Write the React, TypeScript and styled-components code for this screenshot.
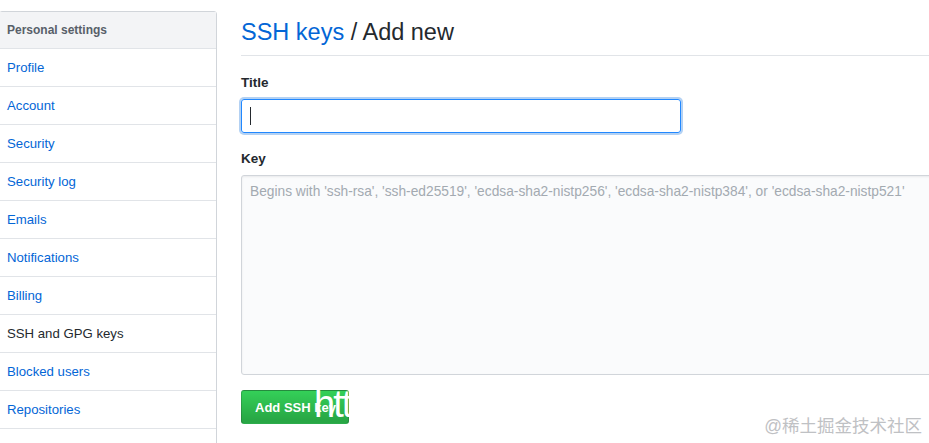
import { createGlobalStyle } from "styled-components";
import styled from "styled-components";

const GlobalStyle = createGlobalStyle`
    html, body {
        margin: 0;
        padding: 0;
        background: #fff;
        font-family: "Liberation Sans", Arial, sans-serif;
        color: #24292e;
        overflow: hidden;
    }
`;

const Page = styled.div`
    display: flex;
    align-items: flex-start;
    gap: 24px;
    width: 929px;
    height: 443px;
    padding-top: 11px;
    box-sizing: border-box;
    position: relative;
    overflow: hidden;
`;

const Menu = styled.nav`
    width: 218px;
    box-sizing: border-box;
    margin-left: -1px;
    flex-shrink: 0;
    border: 1px solid #d1d5da;
    border-radius: 3px;
    background: #fff;
`;

const MenuHeading = styled.div`
    height: 36px;
    display: flex;
    align-items: center;
    padding-left: 7px;
    background: #f3f4f6;
    border-bottom: 1px solid #e1e4e8;
    font-size: 12px;
    font-weight: 700;
    color: #586069;
`;

const MenuItem = styled.a<{ $selected?: boolean }>`
    display: flex;
    align-items: center;
    height: 37px;
    padding-left: 7px;
    border-bottom: 1px solid #e1e4e8;
    font-size: 13.2px;
    color: ${p => (p.$selected ? "#24292e" : "#0366d6")};
    text-decoration: none;
    cursor: pointer;
`;

const Main = styled.main`
    flex: 1;
    min-width: 0;
`;

const Subhead = styled.div`
    display: flex;
    align-items: center;
    height: 46px;
    border-bottom: 1px solid #e1e4e8;
    margin-top: -2px;
`;

const SubheadTitle = styled.h2`
    margin: 0;
    font-size: 23.5px;
    font-weight: 400;
    color: #24292e;

    a {
        color: #0366d6;
        text-decoration: none;
    }
`;

const Field = styled.div<{ $top: number }>`
    display: flex;
    flex-direction: column;
    gap: 8px;
    margin-top: ${p => p.$top}px;
`;

const Label = styled.label`
    font-size: 13.5px;
    font-weight: 700;
    color: #24292e;
    line-height: 16px;
`;

const TitleInput = styled.div`
    width: 440px;
    height: 34px;
    box-sizing: border-box;
    display: flex;
    align-items: center;
    border: 1px solid #2188ff;
    border-radius: 3px;
    box-shadow: 0 0 0 2px rgba(3, 102, 214, 0.3);
    padding: 0 8px;
`;

const Caret = styled.span`
    display: inline-block;
    width: 1px;
    height: 18px;
    background: #24292e;
`;

const KeyArea = styled.div`
    width: 700px;
    height: 200px;
    box-sizing: border-box;
    border: 1px solid #d1d5da;
    border-radius: 3px;
    background: #fafbfc;
    padding: 8px 8px;
    font-size: 13.75px;
    color: #a3aab1;
    white-space: nowrap;
    box-shadow: inset 0 1px 2px rgba(27, 31, 35, 0.075);
`;

const ButtonWrap = styled.div`
    position: relative;
    margin-top: 15px;
    width: 108px;
`;

const AddButton = styled.button`
    width: 108px;
    height: 34px;
    border: 1px solid rgba(27, 31, 35, 0.2);
    border-radius: 3px;
    background: linear-gradient(#34d058, #28a745 90%);
    color: #fff;
    font-size: 13px;
    font-weight: 700;
    font-family: inherit;
    text-align: left;
    white-space: nowrap;
    padding: 0 0 0 13px;
`;

const Overlay = styled.span`
    position: absolute;
    left: 73px;
    top: -8px;
    font-size: 38px;
    line-height: 44px;
    color: #fff;
    font-family: "Liberation Sans Narrow", "Liberation Sans", Arial, sans-serif;
    letter-spacing: -2px;
    pointer-events: none;
`;

const Watermark = styled.div`
    position: absolute;
    right: 7px;
    bottom: 6px;
    font-size: 17.5px;
    color: #bfc1c4;
    font-family: "Liberation Sans", "Noto Sans CJK SC", sans-serif;
`;

const items = [
    "Profile",
    "Account",
    "Security",
    "Security log",
    "Emails",
    "Notifications",
    "Billing",
    "SSH and GPG keys",
    "Blocked users",
    "Repositories",
    ""
];

export default function App() {
    return (
        <>
            <GlobalStyle />
            <Page>
                <Menu>
                    <MenuHeading>Personal settings</MenuHeading>
                    {items.map(item => (
                        <MenuItem key={item} $selected={item === "SSH and GPG keys"}>
                            {item}
                        </MenuItem>
                    ))}
                </Menu>
                <Main>
                    <Subhead>
                        <SubheadTitle>
                            <a>SSH keys</a> / Add new
                        </SubheadTitle>
                    </Subhead>
                    <Field $top={19}>
                        <Label>Title</Label>
                        <TitleInput>
                            <Caret />
                        </TitleInput>
                    </Field>
                    <Field $top={18}>
                        <Label>Key</Label>
                        <KeyArea>
                            Begins with 'ssh-rsa', 'ssh-ed25519', 'ecdsa-sha2-nistp256', 'ecdsa-sha2-nistp384', or 'ecdsa-sha2-nistp521'
                        </KeyArea>
                    </Field>
                    <ButtonWrap>
                        <AddButton>Add SSH key</AddButton>
                        <Overlay>htt</Overlay>
                    </ButtonWrap>
                </Main>
                <Watermark>@稀土掘金技术社区</Watermark>
            </Page>
        </>
    );
}
